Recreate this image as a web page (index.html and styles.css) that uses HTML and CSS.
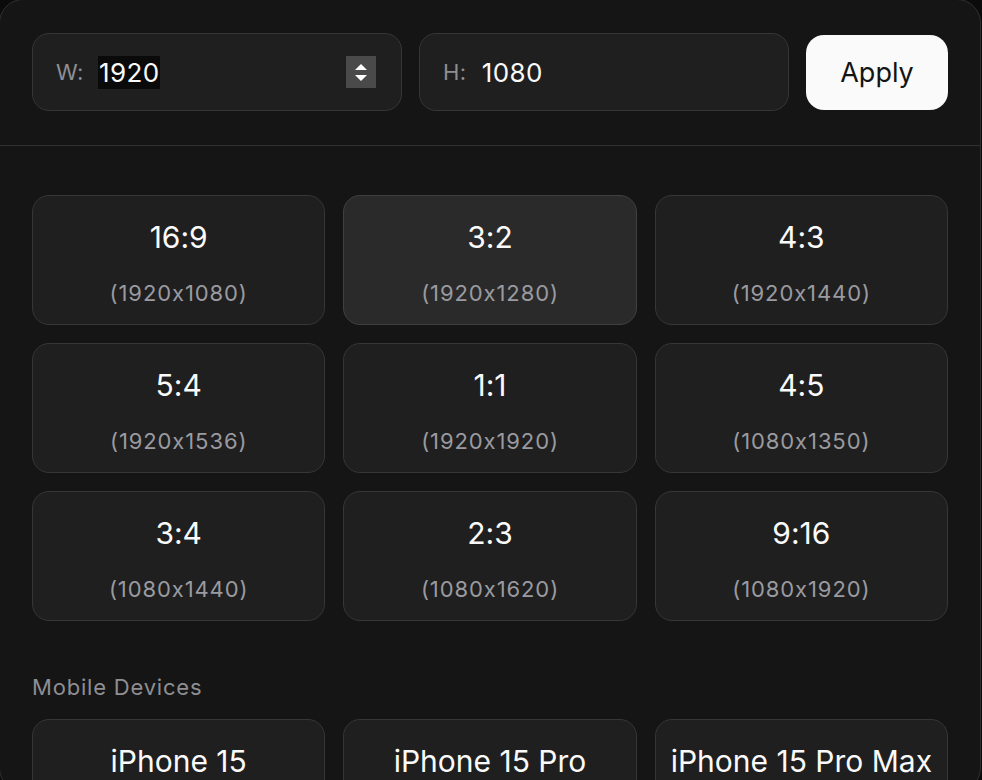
FILE: index.html
```html
<!DOCTYPE html>
<html>
<head>
    <title>Resize</title>
    <link rel="stylesheet" href="styles.css">
</head>
<body>
    <div class="panel">
        <div class="toolbar">
            <div class="field">
                <span class="field-label">W:</span>
                <span class="field-value selected">1920</span>
                <span class="spinner">
                    <svg width="30" height="32" viewBox="0 0 30 32">
                        <path d="M15 8 L21 14 L9 14 Z" fill="#ffffff"/>
                        <path d="M9 19 L21 19 L15 25 Z" fill="#ffffff"/>
                    </svg>
                </span>
            </div>
            <div class="field">
                <span class="field-label">H:</span>
                <span class="field-value">1080</span>
            </div>
            <button class="apply">Apply</button>
        </div>

        <div class="content">
            <div class="grid">
                <div class="card"><div class="ratio">16:9</div><div class="size">(1920x1080)</div></div>
                <div class="card active"><div class="ratio">3:2</div><div class="size">(1920x1280)</div></div>
                <div class="card"><div class="ratio">4:3</div><div class="size">(1920x1440)</div></div>
                <div class="card"><div class="ratio">5:4</div><div class="size">(1920x1536)</div></div>
                <div class="card"><div class="ratio">1:1</div><div class="size">(1920x1920)</div></div>
                <div class="card"><div class="ratio">4:5</div><div class="size">(1080x1350)</div></div>
                <div class="card"><div class="ratio">3:4</div><div class="size">(1080x1440)</div></div>
                <div class="card"><div class="ratio">2:3</div><div class="size">(1080x1620)</div></div>
                <div class="card"><div class="ratio">9:16</div><div class="size">(1080x1920)</div></div>
            </div>

            <p class="section-label">Mobile Devices</p>
            <div class="grid">
                <div class="card"><div class="ratio">iPhone 15</div><div class="size">(1179x2556)</div></div>
                <div class="card"><div class="ratio">iPhone 15 Pro</div><div class="size">(1179x2556)</div></div>
                <div class="card"><div class="ratio">iPhone 15 Pro Max</div><div class="size">(1290x2796)</div></div>
            </div>
        </div>
    </div>
</body>
</html>
```

FILE: styles.css
```css
body {
    margin: 0;
    padding: 0;
    background: #0b0b0b;
    font-family: Inter, "Liberation Sans", sans-serif;
    font-feature-settings: "calt" 0;
    color: #fafafa;
    overflow: hidden;
}
.panel {
    box-sizing: border-box;
    width: 982px;
    height: 793px;
    margin: -1px 0 0 -1px;
    background: #151515;
    border: 1px solid #303030;
    border-radius: 24px;
    overflow: hidden;
}
.toolbar {
    display: flex;
    align-items: center;
    gap: 17px;
    padding: 33px 32px 34px;
    border-bottom: 1px solid #303030;
}
.field {
    box-sizing: border-box;
    flex: 1;
    height: 78px;
    display: flex;
    align-items: center;
    padding: 0 25px 0 23px;
    background: #1f1f1f;
    border: 1px solid #363636;
    border-radius: 17px;
}
.field-label {
    font-size: 22px;
    color: #8e8e93;
    margin-right: 15px;
    letter-spacing: 0.5px;
}
.field-value {
    font-size: 26px;
    line-height: 33px;
    flex: 1;
    letter-spacing: 0.4px;
}
.field-value.selected {
    flex: none;
    background: #0a0a0a;
    padding: 0 1px;
    margin-left: -1px;
}
.field .spinner {
    margin-left: auto;
    display: flex;
    background: #4a4a4a;
}
.apply {
    box-sizing: border-box;
    width: 142px;
    height: 75px;
    border: none;
    outline: none;
    background: #fafafa;
    color: #141414;
    font-family: Inter, "Liberation Sans", sans-serif;
    font-size: 27px;
    border-radius: 18px;
    cursor: pointer;
}
.content {
    padding: 49px 32px 0;
}
.grid {
    display: grid;
    grid-template-columns: repeat(3, 1fr);
    gap: 18px;
}
.card {
    box-sizing: border-box;
    height: 130px;
    padding-top: 23px;
    display: flex;
    flex-direction: column;
    align-items: center;
    background: #1f1f1f;
    border: 1px solid #363636;
    border-radius: 17px;
}
.card.active {
    background: #2a2a2a;
    border-color: #404040;
}
.ratio {
    font-size: 30px;
    line-height: 36px;
}
.size {
    margin-top: 25px;
    font-size: 22px;
    line-height: 26px;
    letter-spacing: 0.9px;
    color: #9a9aa0;
}
.section-label {
    margin: 52px 0 18px;
    font-size: 22px;
    line-height: 28px;
    letter-spacing: 0.8px;
    color: #8e8e93;
}
```
